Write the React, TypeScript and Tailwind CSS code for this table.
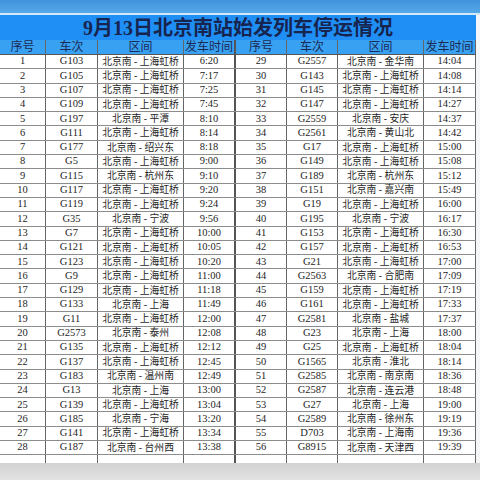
const COLS = ["w-[46px]", "w-[52px]", "w-[86px]", "w-[52px]", "w-[51px]", "w-[51px]", "w-[86px]", "w-[52px]"];

const HEAD = ["序号", "车次", "区间", "发车时间", "序号", "车次", "区间", "发车时间"];

// [train, destination, time]
const LEFT: [string, string, string][] = [
  ["G103", "上海虹桥", "6:20"],
  ["G105", "上海虹桥", "7:17"],
  ["G107", "上海虹桥", "7:25"],
  ["G109", "上海虹桥", "7:45"],
  ["G197", "平潭", "8:10"],
  ["G111", "上海虹桥", "8:14"],
  ["G177", "绍兴东", "8:18"],
  ["G5", "上海虹桥", "9:00"],
  ["G115", "杭州东", "9:10"],
  ["G117", "上海虹桥", "9:20"],
  ["G119", "上海虹桥", "9:24"],
  ["G35", "宁波", "9:56"],
  ["G7", "上海虹桥", "10:00"],
  ["G121", "上海虹桥", "10:05"],
  ["G123", "上海虹桥", "10:20"],
  ["G9", "上海虹桥", "11:00"],
  ["G129", "上海虹桥", "11:18"],
  ["G133", "上海", "11:49"],
  ["G11", "上海虹桥", "12:00"],
  ["G2573", "泰州", "12:08"],
  ["G135", "上海虹桥", "12:12"],
  ["G137", "上海虹桥", "12:45"],
  ["G183", "温州南", "12:49"],
  ["G13", "上海", "13:00"],
  ["G139", "上海虹桥", "13:04"],
  ["G185", "宁海", "13:20"],
  ["G141", "上海虹桥", "13:34"],
  ["G187", "台州西", "13:38"],
];

const RIGHT: [string, string, string][] = [
  ["G2557", "金华南", "14:04"],
  ["G143", "上海虹桥", "14:08"],
  ["G145", "上海虹桥", "14:14"],
  ["G147", "上海虹桥", "14:27"],
  ["G2559", "安庆", "14:37"],
  ["G2561", "黄山北", "14:42"],
  ["G17", "上海虹桥", "15:00"],
  ["G149", "上海虹桥", "15:08"],
  ["G189", "杭州东", "15:12"],
  ["G151", "嘉兴南", "15:49"],
  ["G19", "上海虹桥", "16:00"],
  ["G195", "宁波", "16:17"],
  ["G153", "上海虹桥", "16:30"],
  ["G157", "上海虹桥", "16:53"],
  ["G21", "上海虹桥", "17:00"],
  ["G2563", "合肥南", "17:09"],
  ["G159", "上海虹桥", "17:19"],
  ["G161", "上海虹桥", "17:33"],
  ["G2581", "盐城", "17:37"],
  ["G23", "上海", "18:00"],
  ["G25", "上海虹桥", "18:04"],
  ["G1565", "淮北", "18:14"],
  ["G2585", "南京南", "18:36"],
  ["G2587", "连云港", "18:48"],
  ["G27", "上海", "19:00"],
  ["G2589", "徐州东", "19:19"],
  ["D703", "上海南", "19:36"],
  ["G8915", "天津西", "19:39"],
];

function Cell({ i, children }: { i: number; children?: React.ReactNode }) {
  return (
    <div
      className={`${COLS[i]} shrink-0 h-full flex items-center justify-center whitespace-nowrap leading-none ${
        i === 3 ? "border-r-2 border-[#555]" : "border-r border-[#666]"
      }`}
    >
      {children}
    </div>
  );
}

export default function App() {
  return (
    <div
      className="w-[480px] h-[480px] overflow-hidden bg-[#f4f6f8] text-[#1e1e1e]"
      style={{ fontFamily: '"Liberation Serif", "Noto Sans CJK SC", serif' }}
    >
      {/* top window strip */}
      <div className="h-[13px] bg-gradient-to-b from-[#3f93dc] to-[#57a8e8]" />
      <div className="h-[2px] bg-[#d4e8f8]" />

      <div className="w-[476px] bg-white">
        {/* title */}
        <div className="h-[25px] bg-[#1f8ff6] flex items-center justify-center text-[20px] font-semibold text-[#17244e] leading-none pt-[1px]">
          9月13日北京南站始发列车停运情况
        </div>

        {/* header */}
        <div className="h-[15px] flex bg-[#38a1f2] border-b border-[#555] text-[12px] text-[#1b2a55]">
          {HEAD.map((h, i) => (
            <Cell key={i} i={i}>
              {h}
            </Cell>
          ))}
        </div>

        {/* data rows */}
        {LEFT.map((l, r) => {
          const rr = RIGHT[r];
          return (
            <div key={r} className="h-[14.3px] flex border-b border-[#8c8c8c] text-[10.5px]">
              <Cell i={0}>{r + 1}</Cell>
              <Cell i={1}>{l[0]}</Cell>
              <Cell i={2}>
                <span className="text-[9.8px]">北京南 - {l[1]}</span>
              </Cell>
              <Cell i={3}>{l[2]}</Cell>
              <Cell i={4}>{r + 29}</Cell>
              <Cell i={5}>{rr[0]}</Cell>
              <Cell i={6}>
                <span className="text-[9.8px]">北京南 - {rr[1]}</span>
              </Cell>
              <Cell i={7}>{rr[2]}</Cell>
            </div>
          );
        })}

        {/* partial trailing row */}
        <div className="h-[8px] flex">
          {COLS.map((_, i) => (
            <Cell key={i} i={i} />
          ))}
        </div>
      </div>

      <div className="h-[20px] bg-gradient-to-b from-[#d2d2d2] to-[#e6e6e6]" />
    </div>
  );
}
